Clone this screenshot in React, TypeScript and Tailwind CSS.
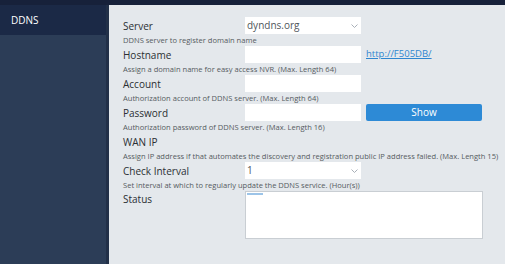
const font = { fontFamily: '"Open Sans", "Noto Sans", sans-serif' }

function Chevron() {
  return (
    <svg width="7" height="4" viewBox="0 0 7 4" className="shrink-0">
      <path d="M0.5 0.5 L3.5 3.5 L6.5 0.5" fill="none" stroke="#a9b0b8" strokeWidth="1" />
    </svg>
  )
}

function Row({ label, hint, children }: { label: string; hint: string; children?: React.ReactNode }) {
  return (
    <div className="flex flex-col">
      <div className="flex h-[17px] items-center">
        <div className="w-[122px] text-[10px] leading-none text-[#2b2f33]">{label}</div>
        {children}
      </div>
      <div className="h-[12px] whitespace-nowrap text-[7.55px] leading-[12px] text-[#555b61]">{hint}</div>
    </div>
  )
}

export default function App() {
  return (
    <div className="flex h-[264px] w-[505px] flex-col overflow-hidden bg-[#17213a]" style={font}>
      <div className="h-[5px] shrink-0 bg-[#17213a]" />
      <div className="flex min-h-0 flex-1">
        <aside className="flex w-[109px] shrink-0 flex-col border-r-[3px] border-[#223048] bg-[#2c3d57]">
          <div className="flex h-[30px] items-center bg-[#1b2946] pl-[11px] text-[10px] text-white">DDNS</div>
        </aside>
        <main className="flex flex-1 flex-col bg-[#e4e8ec] pl-[14px] pt-[12px]">
          <Row label="Server" hint="DDNS server to register domain name">
            <div className="flex h-[17px] w-[116px] items-center justify-between bg-white pl-[2px] pr-[3px] text-[10px] text-[#50565c]">
              <span>dyndns.org</span>
              <Chevron />
            </div>
          </Row>
          <Row label="Hostname" hint="Assign a domain name for easy access NVR. (Max. Length 64)">
            <div className="h-[17px] w-[116px] bg-white" />
            <a className="ml-[5px] text-[9.5px] text-[#2f86d0] underline">http://F505DB/</a>
          </Row>
          <Row label="Account" hint="Authorization account of DDNS server. (Max. Length 64)">
            <div className="h-[17px] w-[116px] bg-white" />
          </Row>
          <Row label="Password" hint="Authorization password of DDNS server. (Max. Length 16)">
            <div className="h-[17px] w-[116px] bg-white" />
            <button className="ml-[5px] h-[17px] w-[116px] rounded-[2px] bg-[#2d8ad6] text-[10px] text-white">Show</button>
          </Row>
          <Row
            label="WAN IP"
            hint="Assign IP address if that automates the discovery and registration public IP address failed. (Max. Length 15)"
          >
            <div className="h-[17px] w-[116px] bg-[#e4e8ec]" />
          </Row>
          <Row label="Check Interval" hint="Set interval at which to regularly update the DDNS service. (Hour(s))">
            <div className="flex h-[17px] w-[116px] items-center justify-between bg-white pl-[2px] pr-[3px] text-[10px] text-[#50565c]">
              <span>1</span>
              <Chevron />
            </div>
          </Row>
          <div className="flex">
            <div className="w-[122px] pt-[3px] text-[10px] leading-none text-[#2b2f33]">Status</div>
            <div className="h-[48px] w-[238px] border border-[#c9ced3] bg-white p-[1px]">
              <div className="h-[2px] w-[16px] bg-[#9cc4e8]" />
            </div>
          </div>
        </main>
      </div>
    </div>
  )
}
